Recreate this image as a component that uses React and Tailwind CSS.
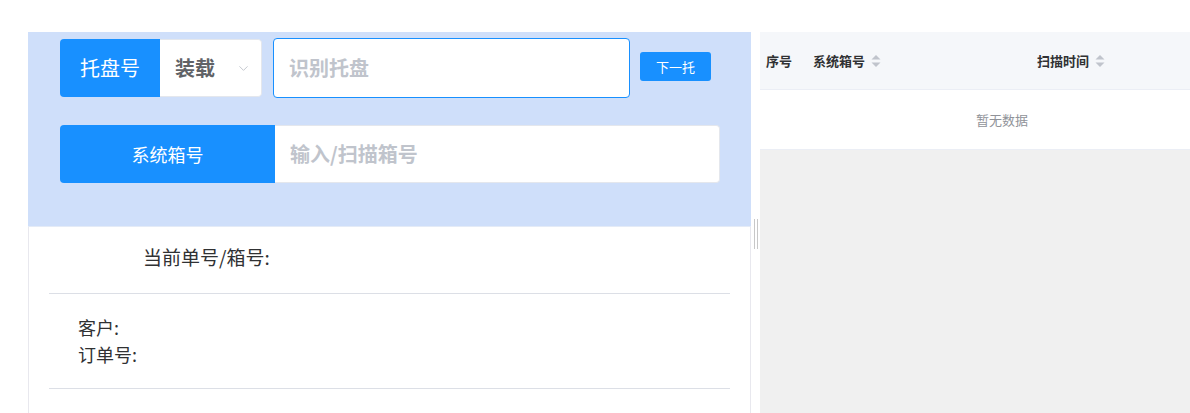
import React from "react";
import { ChevronDown } from "lucide-react";

const SortIcon = () => (
  <svg width="12" height="16" viewBox="0 0 12 16" className="ml-[5px]">
    <path d="M6 2 L10.5 6.5 L1.5 6.5 Z" fill="#c0c4cc" />
    <path d="M6 14 L10.5 9.5 L1.5 9.5 Z" fill="#c0c4cc" />
  </svg>
);

const App = () => {
  return (
    <div
      className="w-[1190px] h-[413px] bg-white pt-8 flex overflow-hidden"
      style={{ fontFamily: '"Noto Sans CJK SC", "Noto Sans", sans-serif' }}
    >
      {/* Left: scan panel */}
      <div className="ml-[28px] w-[723px] flex flex-col">
        <div className="h-[195px] bg-[#cfdffa] px-8 pt-[5px] border-b border-[#e4ebf7]">
          {/* Row 1 */}
          <div className="flex items-center h-[62px]">
            <div className="flex h-[58px] rounded overflow-hidden">
              <div className="w-[100px] bg-[#1890ff] text-white text-[20px] flex items-center justify-center">
                托盘号
              </div>
              <div className="w-[102px] bg-white border border-l-0 border-[#e4e7ed] rounded-r flex items-center pl-[15px] pr-[10px]">
                <span className="text-[20px] font-bold text-[#606266] flex-1">装载</span>
                <ChevronDown size={15} strokeWidth={1.5} color="#c0c4cc" />
              </div>
            </div>
            <div className="ml-[11px] w-[357px] h-[60px] bg-white border border-[#1890ff] rounded flex items-center pl-[15px]">
              <span className="text-[20px] font-bold text-[#c0c4cc]">识别托盘</span>
            </div>
            <button className="ml-[10px] mb-[3px] w-[71px] h-[29px] bg-[#1890ff] rounded-[3px] text-white text-[13px] flex items-center justify-center">
              下一托
            </button>
          </div>

          {/* Row 2 */}
          <div className="flex mt-[26px] h-[58px] w-[660px]">
            <div className="w-[215px] bg-[#1890ff] rounded-l text-white text-[18px] flex items-center justify-center">
              系统箱号
            </div>
            <div className="flex-1 bg-white border border-l-0 border-[#e4e7ed] rounded-r flex items-center pl-[15px]">
              <span className="text-[20px] font-bold text-[#c0c4cc]">输入/扫描箱号</span>
            </div>
          </div>
        </div>

        {/* Info */}
        <div className="flex-1 bg-white border-x border-[#e8e8ee] px-[20px] text-[19px] text-[#303133]">
          <div className="h-[67px] flex items-center pb-[5px] pl-[94px] border-b border-[#dcdfe6]">
            当前单号/箱号:
          </div>
          <div className="h-[95px] flex items-center pl-[29px] border-b border-[#dcdfe6]">
            <p className="text-[18px] leading-[27px]">
              客户:
              <br />
              订单号:
            </p>
          </div>
        </div>
      </div>

      {/* Splitter */}
      <div className="w-[9px] flex justify-center items-start pt-[187px]">
        <div className="flex gap-[2px] h-[30px]">
          <div className="w-px h-full bg-[#c8c8c8]" />
          <div className="w-px h-full bg-[#c8c8c8]" />
        </div>
      </div>

      {/* Right: table */}
      <div className="flex-1 flex flex-col">
        <div className="h-[58px] bg-[#f5f7fa] border-b border-[#ebeef5] flex items-center text-[13px] font-bold text-[#303133]">
          <div className="w-[53px] pl-[6px]">序号</div>
          <div className="w-[224px] flex items-center">
            系统箱号
            <SortIcon />
          </div>
          <div className="flex items-center">
            扫描时间
            <SortIcon />
          </div>
        </div>
        <div className="h-[59px] bg-white flex items-center text-[13px] text-[#909399]">
          <span className="ml-[216px]">暂无数据</span>
        </div>
        <div className="flex-1 bg-[#f0f0f0] border-t border-[#ebeef5]" />
      </div>
    </div>
  );
};

export default App;
